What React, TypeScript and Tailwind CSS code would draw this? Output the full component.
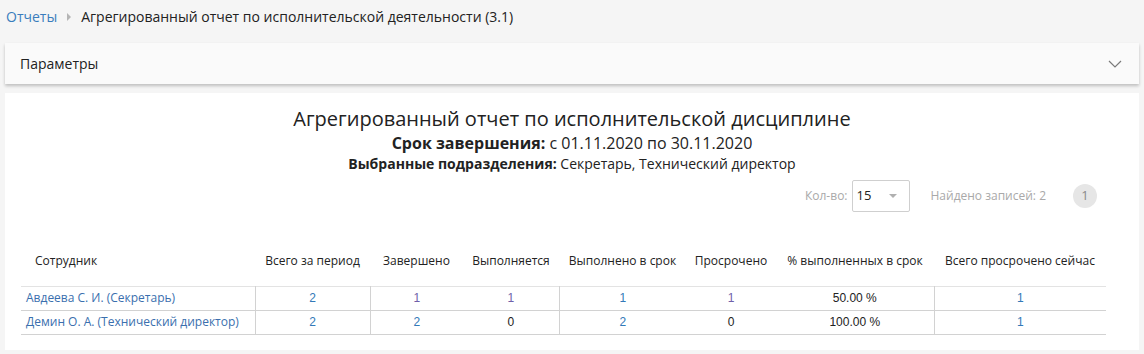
const rows = [
  {
    name: "Авдеева С. И. (Секретарь)",
    cells: [
      { v: "2", c: "link" },
      { v: "1", c: "visited" },
      { v: "1", c: "visited" },
      { v: "1", c: "link" },
      { v: "1", c: "visited" },
      { v: "50.00 %", c: "plain" },
      { v: "1", c: "link" },
    ],
  },
  {
    name: "Демин О. А. (Технический директор)",
    cells: [
      { v: "2", c: "link" },
      { v: "2", c: "link" },
      { v: "0", c: "plain" },
      { v: "2", c: "link" },
      { v: "0", c: "plain" },
      { v: "100.00 %", c: "plain" },
      { v: "1", c: "link" },
    ],
  },
];

const headers = [
  "Всего за период",
  "Завершено",
  "Выполняется",
  "Выполнено в срок",
  "Просрочено",
  "% выполненных в срок",
  "Всего просрочено сейчас",
];

// columns that open a new group get a left border in the body
const groupStart = [true, true, false, true, false, false, true];

const cellColor: Record<string, string> = {
  link: "text-[#3279b8]",
  visited: "text-[#6f5fa9]",
  plain: "text-[#222]",
};

export default function App() {
  return (
    <div className="w-full h-[354px] overflow-hidden bg-[#f5f5f5] font-['Open_Sans',sans-serif] text-[#222]">
      {/* ── Breadcrumb ─────────────────────────────────────────────────── */}
      <div className="h-[43px] flex items-start pt-[7px] px-[6px] text-[14px] leading-[20px]">
        <span className="text-[#3a7dbd]">Отчеты</span>
        <span className="mx-[10px] mt-[6px] w-0 h-0 border-y-[4px] border-y-transparent border-l-[4px] border-l-[#b5b5b5]" />
        <span className="text-[#222]">Агрегированный отчет по исполнительской деятельности (3.1)</span>
      </div>

      {/* ── Parameters panel (collapsed) ───────────────────────────────── */}
      <div className="mx-[5px] h-[41px] bg-[#fafafa] shadow-[0_2px_3px_rgba(0,0,0,0.22)] flex items-center justify-between pl-[15px] pr-[17px]">
        <span className="text-[14px] text-[#222]">Параметры</span>
        <svg width="14" height="8" viewBox="0 0 14 8" fill="none">
          <path d="M1 1l6 6 6-6" stroke="#7a7a7a" strokeWidth="1.2" />
        </svg>
      </div>

      {/* ── Report ─────────────────────────────────────────────────────── */}
      <div className="mx-[5px] mt-[9px] h-[257px] bg-white pt-[13px]">
        <div className="flex flex-col items-center">
          <h1 className="text-[20px] leading-[26px] font-normal text-[#222]">
            Агрегированный отчет по исполнительской дисциплине
          </h1>
          <p className="text-[16px] leading-[22px] text-[#222]">
            <span className="font-bold">Срок завершения:</span> с 01.11.2020 по 30.11.2020
          </p>
          <p className="text-[14px] leading-[20px] text-[#222]">
            <span className="font-bold">Выбранные подразделения:</span> Секретарь, Технический директор
          </p>
        </div>

        {/* page size + count + pager */}
        <div className="flex items-center justify-end pr-[42px] mt-[6px] h-[32px] text-[12px] text-[#a9a9a9]">
          <span className="mr-[4px]">Кол-во:</span>
          <div className="w-[58px] h-[32px] border border-[#cfcfcf] rounded-[2px] flex items-center justify-between pl-[4px] pr-[12px] text-[13px] text-[#222]">
            <span>15</span>
            <span className="w-0 h-0 border-x-[4px] border-x-transparent border-t-[4px] border-t-[#b0b0b0]" />
          </div>
          <span className="ml-[21px]">Найдено записей: 2</span>
          <span className="ml-[27px] w-[24px] h-[24px] rounded-full bg-[#e6e6e6] text-[#8a8a8a] flex items-center justify-center text-[13px]">
            1
          </span>
        </div>

        {/* table */}
        <div className="pl-[16px] mt-[24px]">
          <table className="table-fixed w-[1085px] border-collapse">
            <colgroup>
              <col className="w-[234px]" />
              <col className="w-[115px]" />
              <col className="w-[93px]" />
              <col className="w-[96px]" />
              <col className="w-[127px]" />
              <col className="w-[90px]" />
              <col className="w-[158px]" />
              <col className="w-[172px]" />
            </colgroup>
            <thead>
              <tr className="h-[50px] border-b border-[#e3e3e3] text-[12px] text-[#222]">
                <th className="font-normal text-left pl-[14px]">Сотрудник</th>
                {headers.map((h) => (
                  <th key={h} className="font-normal text-center whitespace-nowrap">
                    {h}
                  </th>
                ))}
              </tr>
            </thead>
            <tbody>
              {rows.map((r) => (
                <tr key={r.name} className="h-[24px] border-b border-[#d2d2d2]">
                  <td className="pl-[5px] text-[12px] text-[#3a6fae]">{r.name}</td>
                  {r.cells.map((c, i) => (
                    <td
                      key={i}
                      className={`text-center font-['Liberation_Sans',sans-serif] text-[12px] ${cellColor[c.c]} ${
                        groupStart[i] ? "border-l border-[#d2d2d2]" : ""
                      }`}
                    >
                      {c.v}
                    </td>
                  ))}
                </tr>
              ))}
            </tbody>
          </table>
        </div>
      </div>
    </div>
  );
}
